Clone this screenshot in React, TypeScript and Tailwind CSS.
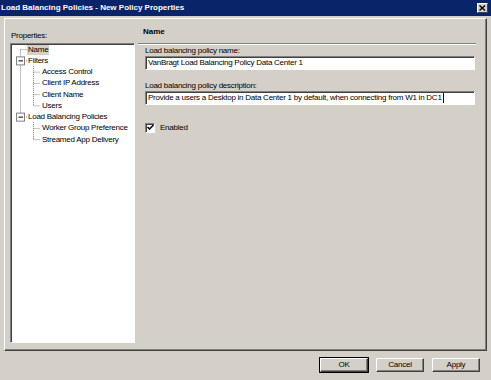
import React from "react";

const font = "font-['Liberation_Sans',Tahoma,Arial,sans-serif]";

const ROW = 11.25;
const yc = (i: number) => ROW / 2 + ROW * i;

const treeItems = [
  { label: "Name", level: 0, selected: true },
  { label: "Filters", level: 0, expander: true },
  { label: "Access Control", level: 1 },
  { label: "Client IP Address", level: 1 },
  { label: "Client Name", level: 1 },
  { label: "Users", level: 1 },
  { label: "Load Balancing Policies", level: 0, expander: true },
  { label: "Worker Group Preference", level: 1 },
  { label: "Streamed App Delivery", level: 1 },
];

function TreeLines() {
  const dot = { stroke: "#808080", strokeWidth: 1, strokeDasharray: "1 1" };
  const childRows = [2, 3, 4, 5, 7, 8];
  return (
    <svg className="absolute left-0 top-0" width="123" height="110">
      <line x1="9.5" y1={yc(0)} x2="9.5" y2={yc(6)} {...dot} />
      <line x1="9.5" y1={yc(0)} x2="16" y2={yc(0)} {...dot} />
      <line x1="13" y1={yc(1)} x2="16" y2={yc(1)} {...dot} />
      <line x1="13" y1={yc(6)} x2="16" y2={yc(6)} {...dot} />
      <line x1="22.5" y1={yc(1) + 5} x2="22.5" y2={yc(5)} {...dot} />
      <line x1="22.5" y1={yc(6) + 5} x2="22.5" y2={yc(8)} {...dot} />
      {childRows.map((r) => (
        <line key={r} x1="22.5" y1={yc(r)} x2="29" y2={yc(r)} {...dot} />
      ))}
      {[1, 6].map((r) => (
        <g key={r}>
          <rect x="5.5" y={yc(r) - 4} width="8" height="8" fill="#fff" stroke="#808080" />
          <line x1="7.5" y1={yc(r)} x2="12" y2={yc(r)} stroke="#000" />
        </g>
      ))}
    </svg>
  );
}

function Button({ label, primary }: { label: string; primary?: boolean }) {
  return (
    <div className={primary ? "border border-black" : "border border-transparent"}>
      <div className="flex h-[14px] w-[48px] items-center justify-center border border-t-white border-l-white border-r-[#404040] border-b-[#404040] shadow-[inset_-1px_-1px_0_#808080] tracking-[-0.25px]">
        {label}
      </div>
    </div>
  );
}

function TextBox({ children }: { children: React.ReactNode }) {
  return (
    <div className="flex h-[14px] w-[330px] items-center border border-t-[#808080] border-l-[#808080] border-b-white border-r-white bg-white pl-[2px] shadow-[inset_1px_1px_0_#404040] tracking-[-0.25px] whitespace-nowrap">
      {children}
    </div>
  );
}

export default function App() {
  return (
    <div className={`${font} flex h-[380px] w-[491px] flex-col bg-[#d4d0c8] text-[8px] text-black`}>
      <div className="flex h-[16px] items-center justify-between bg-[#0a246a] pl-[1px] pr-[3px]">
        <span className="font-bold text-white">Load Balancing Policies - New Policy Properties</span>
        <div className="flex h-[10px] w-[11px] items-center justify-center border border-t-white border-l-white border-r-[#404040] border-b-[#404040] bg-[#d4d0c8]">
          <svg width="7" height="6" viewBox="0 0 7 6">
            <path d="M0.5 0.5 L6 5.5 M6 0.5 L0.5 5.5" stroke="#000" strokeWidth="1.4" />
          </svg>
        </div>
      </div>

      <div className="mx-[4px] mt-[2px] flex h-[333px] border border-t-white border-l-white border-r-[#404040] border-b-[#404040] shadow-[inset_-1px_-1px_0_#808080]">
        <div className="flex flex-col pl-[5px] pt-[12px]">
          <div className="pl-[1px] leading-[10px] tracking-[-0.25px]">Properties:</div>
          <div className="mt-[2px] h-[300px] w-[125px] border border-t-[#808080] border-l-[#808080] border-b-white border-r-white bg-white shadow-[inset_1px_1px_0_#404040]">
            <div className="relative">
              <TreeLines />
              {treeItems.map((it) => (
                <div
                  key={it.label}
                  className={`flex h-[11.25px] items-center tracking-[-0.25px] ${it.level === 0 ? "pl-[16px]" : "pl-[30px]"}`}
                >
                  <span className={`leading-[10px] px-[1px] ${it.selected ? "bg-[#d4d0c8]" : ""}`}>{it.label}</span>
                </div>
              ))}
            </div>
          </div>
        </div>

        <div className="ml-[3px] flex w-[338px] flex-col">
          <div className="h-[24px] pl-[5px] pt-[8px] font-bold leading-[10px]">Name</div>
          <div className="border-t border-b border-t-[#808080] border-b-white" />
          <div className="flex flex-col pl-[7px]">
            <div className="leading-[11px] tracking-[-0.25px]">Load balancing policy name:</div>
            <TextBox>VanBragt Load Balancing Policy Data Center 1</TextBox>
            <div className="mt-[10px] leading-[11px] tracking-[-0.25px]">Load balancing policy description:</div>
            <TextBox>
              Provide a users a Desktop in Data Center 1 by default, when connecting from W1 in DC1
              <span className="ml-[1px] h-[10px] w-[1px] bg-black" />
            </TextBox>
            <div className="mt-[17px] flex h-[11px] items-center">
              <div className="flex h-[10px] w-[10px] items-center justify-center border border-t-[#808080] border-l-[#808080] border-b-white border-r-white bg-white shadow-[inset_1px_1px_0_#404040]">
                <svg width="7" height="7" viewBox="0 0 7 7">
                  <path d="M0.5 3 L2.5 5 L6.5 1" stroke="#000" strokeWidth="1.5" fill="none" />
                </svg>
              </div>
              <span className="ml-[5px] tracking-[-0.25px]">Enabled</span>
            </div>
          </div>
        </div>
      </div>

      <div className="mt-[6px] flex justify-end gap-[6px] pr-[10px]">
        <Button label="OK" primary />
        <Button label="Cancel" />
        <Button label="Apply" />
      </div>
    </div>
  );
}
